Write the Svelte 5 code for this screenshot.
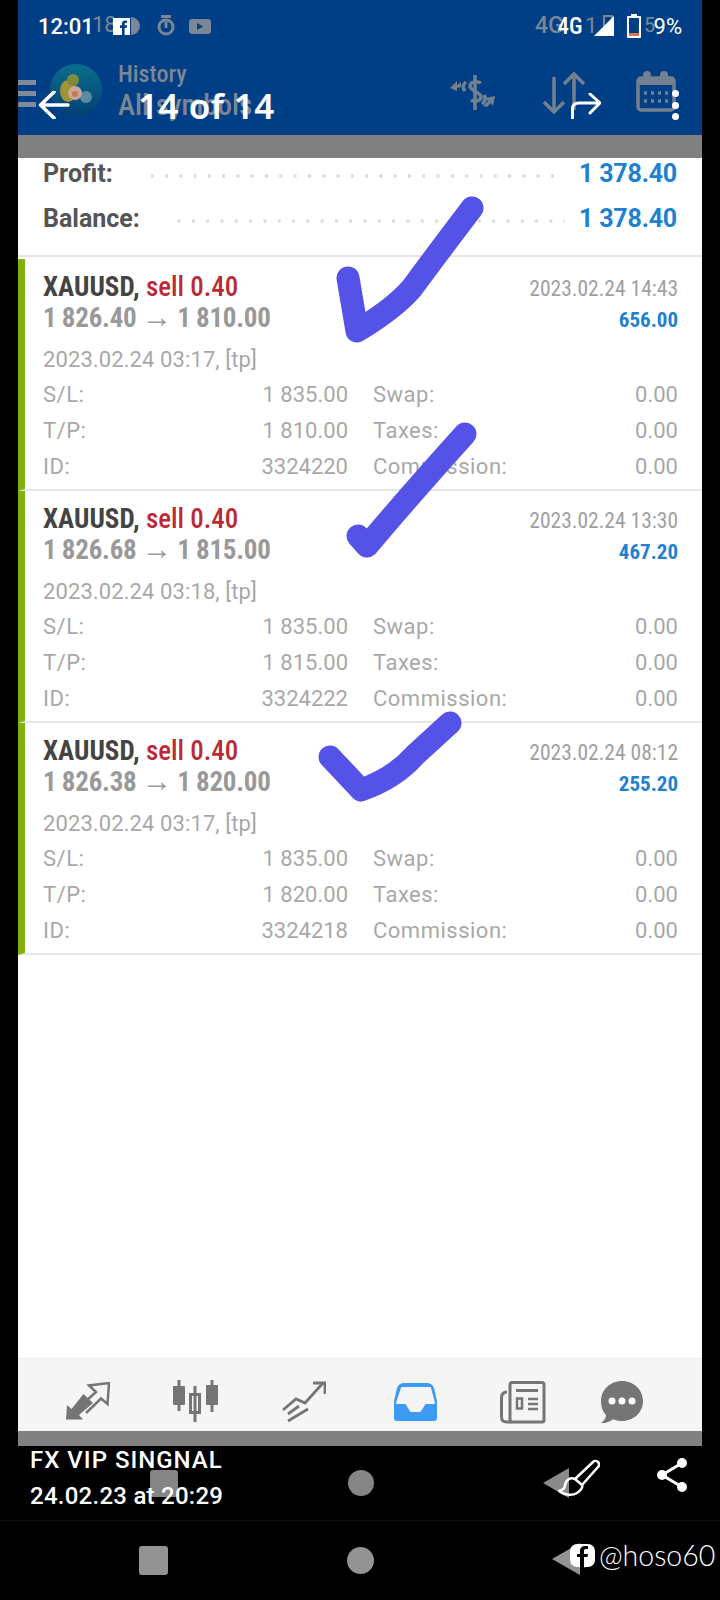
<script>
  const trades = [
    { open: "1 826.40", close: "1 810.00", closed: "2023.02.24 14:43", profit: "656.00", opened: "2023.02.24 03:17, [tp]", sl: "1 835.00", tp: "1 810.00", id: "3324220" },
    { open: "1 826.68", close: "1 815.00", closed: "2023.02.24 13:30", profit: "467.20", opened: "2023.02.24 03:18, [tp]", sl: "1 835.00", tp: "1 815.00", id: "3324222" },
    { open: "1 826.38", close: "1 820.00", closed: "2023.02.24 08:12", profit: "255.20", opened: "2023.02.24 03:17, [tp]", sl: "1 835.00", tp: "1 820.00", id: "3324218" }
  ];
</script>

<div class="phone">
  <header class="top">
    <div class="status">
      <span class="time">12:01</span>
      <svg class="fb-small" width="17" height="17" viewBox="0 0 17 17"><rect width="17" height="17" fill="#fff"/><path d="M9 17V10H7V7.300h2V5.400C9 3.300 10.300 2.400 12 2.400h2v2.600h-1.300c-.9 0-1.100.4-1.100 1.100v1.200h2.400l-.4 2.700h-2V17z" fill="#003e85"/></svg>
      <span class="spacer"></span>
      <span class="net">4G</span>
      <svg class="signal" width="20" height="20" viewBox="0 0 20 20"><path d="M20 0V20H0z" fill="#fff"/></svg>
      <svg class="battery" width="14" height="24" viewBox="0 0 14 24"><path d="M4 0h6v2h3a1 1 0 0 1 1 1v20a1 1 0 0 1-1 1H1a1 1 0 0 1-1-1V3a1 1 0 0 1 1-1h3z" fill="#fff"/><rect x="2" y="4" width="10" height="18" fill="#003e85"/><rect x="2" y="19" width="10" height="3" fill="#e0734e"/></svg>
      <span class="pct">9%</span>
    </div>
    <div class="toolbar">
      <svg class="back" width="32" height="28" viewBox="0 0 32 28"><path d="M30 14H3M16 1 2.500 14 16 27" fill="none" stroke="#fff" stroke-width="3.500" stroke-linecap="round" stroke-linejoin="round"/></svg>
      <span class="title">14 of 14</span>
      <span class="spacer"></span>
      <svg class="forward" width="30" height="26" viewBox="0 0 30 26"><path d="M1.500 25V16Q1.500 10 8 10H28M19 1 29 10 19 20" fill="none" stroke="#fff" stroke-width="3" stroke-linecap="round" stroke-linejoin="round"/></svg>
      <span class="dots"><i></i><i></i><i></i></span>
    </div>

    <!-- previous screen showing through the screenshot overlay -->
    <div class="ghost">
      <span class="g-time">18</span>
      <svg class="g-icons" width="90" height="24" viewBox="0 0 90 24" fill="#7b8696">
        <path d="M2 3a9 9 0 0 1 0 18z"/>
        <circle cx="37" cy="13" r="7" fill="none" stroke="#7b8696" stroke-width="3"/><rect x="32" y="1" width="10" height="3"/><rect x="35.500" y="8" width="3" height="6"/>
        <path d="M63 5h16a3 3 0 0 1 3 3v9a3 3 0 0 1-3 3H63a3 3 0 0 1-3-3V8a3 3 0 0 1 3-3z"/><path d="M68 9l6 3.500-6 3.500z" fill="#003e85"/>
      </svg>
      <span class="g-net">4G</span><span class="g-one">1</span>
      <span class="g-batt"></span><span class="g-pct">5</span>
      <div class="burger"><i></i><i></i><i></i></div>
      <svg class="logo" width="56" height="56" viewBox="0 0 56 56">
        <defs><linearGradient id="logo-bg" x1="0" y1="0" x2="0" y2="1"><stop offset="0" stop-color="#0b6f8c"/><stop offset="1" stop-color="#033f74"/></linearGradient></defs>
        <circle cx="29" cy="28" r="26" fill="url(#logo-bg)"/>
        <ellipse cx="21" cy="29" rx="8" ry="11" fill="#a49334"/>
        <circle cx="26" cy="18" r="6" fill="#7c8c3c"/>
        <circle cx="39" cy="35" r="6" fill="#5a8ba0"/>
        <circle cx="28" cy="31" r="7" fill="#c9a79a"/>
        <circle cx="28" cy="32" r="3" fill="#c8764a"/>
      </svg>
      <span class="g-history">History</span>
      <span class="g-all">All symbols</span>
      <svg class="g-dollar" width="48" height="38" viewBox="0 0 48 38" fill="none" stroke="#72808f" stroke-width="3.500">
        <path d="M27 1v35"/>
        <path d="M33 9c-3-2-11-2-11 3 0 5 11 6 11 11 0 4-7 5-10 3"/>
        <path d="M18 8Q13 12 17 17M36 21Q39 26 34 30"/>
        <path d="M2 14 9 7v4l4-3v5l-4 1v3zM47 22 37 24l3 3-5 5 4 1 4-4 2 3z" fill="#72808f" stroke="none"/>
      </svg>
      <svg class="g-sort" width="44" height="42" viewBox="0 0 44 42" fill="none" stroke="#72808f" stroke-width="3.500"><path d="M12 5V40M2 30 12 40 22 30"/><path d="M32 38V2M22 12 32 2 42 12"/></svg>
      <svg class="g-cal" width="40" height="42" viewBox="0 0 40 42" fill="none" stroke="#72808f" stroke-width="3.500">
        <rect x="2" y="8" width="36" height="32" rx="3"/>
        <rect x="2" y="8" width="36" height="7" fill="#72808f" stroke="none"/>
        <circle cx="11" cy="5" r="4" fill="#72808f" stroke="none"/><circle cx="28" cy="5" r="4" fill="#72808f" stroke="none"/>
        <path d="M8 23H34M8 31H34" stroke-dasharray="3 4"/>
      </svg>
    </div>
  </header>

  <div class="band"></div>

  <main class="content">
    <section class="summary">
      <div class="sum-row"><span class="sum-label">Profit:</span><span class="leader"></span><span class="sum-value">1 378.40</span></div>
      <div class="sum-row"><span class="sum-label">Balance:</span><span class="leader"></span><span class="sum-value">1 378.40</span></div>
    </section>

    {#each trades as t}
      <article class="trade">
        <div class="head">
          <div>
            <div class="symbol"><b>XAUUSD,</b> <span class="sell">sell 0.40</span></div>
            <div class="prices">{t.open} <span class="arrow">→</span> {t.close}</div>
          </div>
          <div class="result">
            <div class="closed">{t.closed}</div>
            <div class="profit">{t.profit}</div>
          </div>
        </div>
        <div class="opened">{t.opened}</div>
        <div class="details">
          <div class="pair"><span>S/L:</span><span>{t.sl}</span></div>
          <div class="pair"><span>Swap:</span><span>0.00</span></div>
          <div class="pair"><span>T/P:</span><span>{t.tp}</span></div>
          <div class="pair"><span>Taxes:</span><span>0.00</span></div>
          <div class="pair"><span>ID:</span><span>{t.id}</span></div>
          <div class="pair"><span>Commission:</span><span>0.00</span></div>
        </div>
      </article>
    {/each}

    <!-- hand drawn ticks -->
    <svg class="ticks" width="684" height="700" viewBox="18 190 684 700" fill="none" stroke="#5552e8" stroke-width="23" stroke-linecap="round" stroke-linejoin="round">
      <path d="M348 278 L357 331 Q395 308 412 288 Q440 250 472 208" />
      <path d="M358 536 L367 546 Q410 495 465 434" />
      <path d="M330 757 L361 790 Q395 778 415 755 L450 723" />
    </svg>
  </main>

  <nav class="tabs">
    <svg width="44" height="40" viewBox="0 0 44 40"><path d="M0 37.500 1 23l4.500 4 12-15 9.500 9-14 12 4 4.500z" fill="#757575"/><path d="M20 31 35 16.500 41.500 22 43 1 23 3.500 30 10 18 21" fill="none" stroke="#757575" stroke-width="2.500"/></svg>
    <svg width="46" height="44" viewBox="0 0 46 44" fill="#757575"><rect x="0" y="6" width="12" height="19" rx="1"/><rect x="4.500" y="0" width="3" height="31"/><rect x="17.500" y="14.500" width="9" height="18" fill="none" stroke="#757575" stroke-width="3"/><rect x="20.500" y="6" width="3" height="36"/><rect x="33" y="5" width="12" height="20" rx="1"/><rect x="37.500" y="0" width="3" height="32"/></svg>
    <svg width="44" height="42" viewBox="0 0 44 42" fill="none" stroke="#757575" stroke-width="2.800"><path d="M1 29 14 18 23 22 41 2"/><path d="M31 2H43V13"/><path d="M6 33 17 25M6 40 26 28"/></svg>
    <svg width="43" height="38" viewBox="0 0 43 38"><path d="M10 0H33Q38 0 40 5L43 18V35Q43 38 40 38H3Q0 38 0 35V18L3 5Q5 0 10 0z" fill="#3d9bf5"/><path d="M8 5H36L40 20H31L26 28H17L12 20H3z" fill="#f5f5f5" stroke="#f5f5f5" stroke-width="2" stroke-linejoin="round"/></svg>
    <svg width="46" height="43" viewBox="0 0 46 43" fill="none" stroke="#757575" stroke-width="3"><rect x="10" y="1.500" width="34" height="39.500" rx="2"/><path d="M7 11Q1.500 11 1.500 17V36Q1.500 41 7 41H12"/><path d="M16 9.500H38"/><rect x="17" y="17.500" width="5" height="10" stroke-width="2.500"/><path d="M28 18H38M28 23H38M28 28H38" stroke-width="2.500"/></svg>
    <svg width="44" height="44" viewBox="0 0 44 44"><path d="M22 1c12 0 21 9 21 20s-9 20-21 20c-3 0-6-.6-9-1.800C9 42 5 43.500 1 43c3-2 5-5 5-8-3.500-3.500-5-8-5-14C1 10 10 1 22 1z" fill="#757575"/><circle cx="12" cy="21" r="3.500" fill="#fff"/><circle cx="22" cy="21" r="3.500" fill="#fff"/><circle cx="32" cy="21" r="3.500" fill="#fff"/></svg>
  </nav>
  <div class="band small"></div>
</div>

<footer class="bottom">
  <div class="caption">
    <div class="meta">
      <div class="line-a">FX VIP SINGNAL</div>
      <div class="line-b">24.02.23 at 20:29</div>
    </div>
    <svg class="brush" width="42" height="42" viewBox="0 0 42 42" fill="none" stroke="#fff" stroke-width="2.500" stroke-linejoin="round"><path d="M17 22 35 5a3.500 3.500 0 0 1 5 5L24 28"/><path d="M17 22c-5-2-9 1-10 6 0 3-2 5-6 6 5 4 13 5 18 2 4-3 6-6 5-8z"/></svg>
    <svg class="share" width="32" height="36" viewBox="0 0 32 36" fill="#fff" stroke="#fff" stroke-width="3"><path d="M26 6 6 18l20 12" fill="none"/><circle cx="26" cy="6" r="3.500"/><circle cx="6" cy="18" r="3.500"/><circle cx="26" cy="30" r="3.500"/></svg>
    <!-- dimmed nav bar of the previous screen -->
    <i class="n-square top-nav"></i><i class="n-circle top-nav"></i>
    <svg class="n-tri top-nav" width="26" height="30" viewBox="0 0 26 30"><path d="M26 0V30L0 15z" fill="#8a8a8a"/></svg>
  </div>
  <div class="navbar">
    <i class="n-square"></i><i class="n-circle"></i>
    <svg class="n-tri" width="28" height="32" viewBox="0 0 28 32"><path d="M28 0V32L0 16z" fill="#939393"/></svg>
    <div class="mark">
      <svg width="25" height="28" viewBox="0 0 25 28"><path d="M7 0h11a7 7 0 0 1 7 7v9a7 7 0 0 1-7 7h-3l-4 3-1-3H7a7 7 0 0 1-7-7V7a7 7 0 0 1 7-7z" fill="#fff"/><path d="M10 27V13H7v-3h3V7c0-3 2-5 5-5h3v3h-2c-1.500 0-2 .7-2 2v3h4l-.6 3H14v13z" fill="#000"/></svg>
      <span>@hoso60</span>
    </div>
  </div>
</footer>

<style>
  :global(body) {
    background: #000;
    font-family: Roboto, "Liberation Sans", sans-serif;
  }

  .phone {
    margin: 0 18px;
    width: 684px;
    height: 1446px;
    display: flex;
    flex-direction: column;
    background: #fff;
  }

  .top {
    position: relative;
    height: 135px;
    background: #003e85;
    color: #fff;
    overflow: hidden;
    flex: none;
  }

  .status {
    display: flex;
    align-items: center;
    height: 52px;
    padding-left: 20px;
    position: relative;
    z-index: 1;
  }

  .time {
    font-size: 22px;
    font-weight: 500;
  }

  .fb-small { margin-left: 19px; }
  .spacer { flex: 1; }

  .net {
    font-size: 23px;
    font-weight: 500;
    font-stretch: condensed;
    margin-right: 11px;
  }

  .battery { margin-left: 13px; }

  .pct {
    font-size: 22px;
    margin: 0 20px 0 13px;
  }

  .toolbar {
    display: flex;
    align-items: center;
    height: 106px;
    padding-left: 20px;
    position: relative;
    z-index: 1;
  }

  .title {
    font-family: "Noto Sans", sans-serif;
    font-size: 35px;
    font-weight: 600;
    letter-spacing: 0.5px;
    margin-left: 68px;
  }

  .forward { margin-right: 71px; margin-top: 1px; }

  .dots {
    display: flex;
    flex-direction: column;
    gap: 4.5px;
    margin-right: 23px;
  }

  .dots i {
    width: 7px;
    height: 7px;
    border-radius: 50%;
    background: #fff;
  }

  .ghost {
    position: absolute;
    inset: 0;
    color: #7b8696;
  }

  .ghost > * { position: absolute; }

  .g-time { left: 74px; top: 12px; font-size: 22px; }
  .g-icons { left: 111px; top: 14px; }
  .g-net { left: 517px; top: 12px; font-size: 23px; font-weight: 500; }
  .g-one { left: 567px; top: 13px; font-size: 22px; }
  .g-batt { left: 585px; top: 15px; width: 6px; height: 16px; border: 2px solid #7b8696; }
  .g-pct { left: 626px; top: 13px; font-size: 20px; }

  .burger {
    left: 0;
    top: 80px;
    display: flex;
    flex-direction: column;
    gap: 6px;
  }

  .burger i {
    width: 18px;
    height: 5px;
    background: #7f8b99;
  }

  .logo { left: 29px; top: 62px; }
  .g-history { left: 100px; top: 60px; font-size: 24px; font-stretch: condensed; font-weight: 500; }
  .g-all { left: 100px; top: 88px; font-size: 29px; font-stretch: condensed; font-weight: 500; }
  .g-dollar { left: 430px; top: 74px; }
  .g-sort { left: 524px; top: 72px; }
  .g-cal { left: 618px; top: 70px; }

  .band {
    height: 23px;
    background: #808080;
    flex: none;
  }

  .band.small { height: 15px; }

  .content {
    flex: 1;
    position: relative;
    min-height: 0;
  }

  .summary {
    display: flex;
    flex-direction: column;
    gap: 15px;
    padding: 0 25px 22px;
    margin-bottom: 2px;
    border-bottom: 2px solid #e6e6e6;
  }

  .sum-row {
    display: flex;
    align-items: center;
    height: 30px;
    font-size: 25px;
    font-weight: 700;
  }

  .sum-label { color: #555; }

  .leader {
    flex: 1;
    height: 4px;
    margin: 6px 14px 0 32px;
    background: radial-gradient(circle, #dcdcdc 1.5px, transparent 2px) left center / 14.3px 4px repeat-x;
  }

  .sum-value {
    color: #2180cf;
    letter-spacing: -0.2px;
  }

  .trade {
    height: 230px;
    padding-left: 18px;
    padding-right: 24px;
    border-left: 7px solid #7fb10f;
    border-bottom: 2px solid #e6e6e6;
    color: #a8a8a8;
    font-size: 22px;
  }

  .head {
    display: flex;
    justify-content: space-between;
    padding-top: 12px;
  }

  .symbol {
    font-size: 27px;
    line-height: 32px;
    font-stretch: condensed;
    color: #444;
  }

  .sell {
    color: #bb2b36;
    font-weight: 500;
  }

  .prices {
    font-size: 27px;
    line-height: 28px;
    margin-top: 1px;
    font-weight: 700;
    font-stretch: condensed;
    letter-spacing: -0.25px;
    word-spacing: -0.5px;
    color: #999;
  }

  .arrow {
    font-size: 30px;
    line-height: 20px;
    font-weight: 400;
  }

  .result { text-align: right; }

  .closed {
    font-size: 21.5px;
    line-height: 36px;
    font-stretch: condensed;
    color: #a0a0a0;
  }

  .profit {
    font-size: 21px;
    line-height: 26px;
    font-weight: 700;
    font-stretch: condensed;
    color: #2180cf;
  }

  .opened {
    line-height: 28px;
    margin-top: 13px;
    letter-spacing: 0.1px;
  }

  .details {
    display: grid;
    grid-template-columns: 305px 305px;
    column-gap: 25px;
    grid-auto-rows: 36px;
    margin-top: 3px;
    line-height: 36px;
  }

  .pair {
    display: flex;
    justify-content: space-between;
  }

  .pair span:first-child { letter-spacing: 0.5px; }

  .ticks {
    position: absolute;
    left: 0;
    top: 32px;
    pointer-events: none;
  }

  .tabs {
    height: 58px;
    padding: 14px 0 0 16px;
    flex: none;
    display: grid;
    grid-template-columns: 108px 108px 108px 114px 102px 96px;
    align-items: center;
    justify-items: center;
    background: #f5f5f5;
    border-top: 1px solid #ececec;
  }

  .bottom {
    width: 720px;
    height: 154px;
    background: #000;
    color: #fff;
  }

  .caption {
    position: relative;
    height: 74px;
    border-bottom: 1px solid #0c0c0c;
    display: flex;
    align-items: flex-start;
    padding: 0 0 0 30px;
  }

  .meta {
    font-size: 24px;
    font-weight: 500;
    line-height: 36px;
    margin-top: -4px;
    flex: 1;
    position: relative;
    z-index: 1;
  }

  .line-a { letter-spacing: 1px; }
  .line-b { letter-spacing: 0.25px; }

  .brush { margin-top: 11px; margin-right: 56px; position: relative; z-index: 1; }
  .share { margin-top: 11px; margin-right: 32px; }

  .navbar {
    position: relative;
    height: 79px;
  }

  .n-square {
    position: absolute;
    left: 139px;
    top: 25px;
    width: 29px;
    height: 29px;
    border-radius: 3px;
    background: #939393;
  }

  .n-circle {
    position: absolute;
    left: 347px;
    top: 26px;
    width: 27px;
    height: 27px;
    border-radius: 50%;
    background: #939393;
  }

  .n-tri {
    position: absolute;
    left: 552px;
    top: 22px;
  }

  .n-square.top-nav { left: 150px; top: 24px; width: 28px; height: 27px; background: #858585; }
  .n-circle.top-nav { left: 348px; top: 24px; width: 26px; height: 26px; background: #858585; }
  .n-tri.top-nav { left: 543px; top: 22px; }

  .mark {
    position: absolute;
    left: 570px;
    top: 23px;
    display: flex;
    align-items: flex-start;
    gap: 4px;
  }

  .mark span {
    font-family: Lato, sans-serif;
    font-weight: 300;
    font-size: 28.5px;
    line-height: 30px;
    margin-top: -4px;
  }
</style>
